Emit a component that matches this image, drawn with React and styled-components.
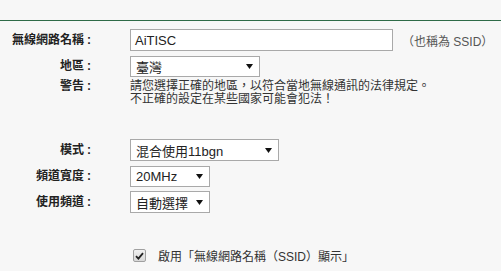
import React from "react";
import styled, { createGlobalStyle } from "styled-components";

const GlobalStyle = createGlobalStyle`
  html, body { margin: 0; padding: 0; }
  body {
    background: #f7f7f7;
    font-family: "Liberation Sans", "Noto Sans CJK TC", sans-serif;
    color: #333;
  }
`;

const Page = styled.div`
  width: 501px;
  height: 271px;
  overflow: hidden;
`;

const TopBar = styled.div`
  height: 20px;
  border-bottom: 1px solid #2e6b48;
`;

const Form = styled.div`
  display: flex;
  flex-direction: column;
  padding-top: 8px;
`;

const Row = styled.div`
  display: grid;
  grid-template-columns: 91px 1fr;
  column-gap: 39px;
  align-items: ${(p) => (p.$top ? "start" : "center")};
  margin-top: ${(p) => p.$mt || 0}px;
`;

const Label = styled.div`
  text-align: right;
  font-size: 12px;
  font-weight: bold;
  color: #222;
  line-height: 13px;
  white-space: nowrap;
`;

const Colon = styled.span`
  margin-left: 3px;
`;

const Field = styled.div`
  display: flex;
  align-items: center;
  gap: 8px;
`;

const TextInput = styled.div`
  box-sizing: border-box;
  width: 263px;
  height: 22px;
  border: 1px solid #a9a9a9;
  background: #fff;
  font-size: 13px;
  color: #222;
  padding-left: 4px;
  display: flex;
  align-items: center;
`;

const Note = styled.span`
  font-size: 12px;
  color: #555;
  margin-left: 1px;
`;

const SelectBox = styled.div`
  box-sizing: border-box;
  width: ${(p) => p.$w}px;
  height: ${(p) => p.$h || 21}px;
  border: 1px solid #a9a9a9;
  background: #fff;
  font-size: 13px;
  color: #222;
  padding: 0 6px 0 5px;
  display: flex;
  align-items: center;
  justify-content: space-between;
`;

const Arrow = () => (
  <svg width="7" height="5" viewBox="0 0 7 5">
    <path d="M0 0 L7 0 L3.5 5 Z" fill="#111" />
  </svg>
);

const Select = ({ w, h, children }) => (
  <SelectBox $w={w} $h={h}>
    <span>{children}</span>
    <Arrow />
  </SelectBox>
);

const Warning = styled.div`
  font-size: 12px;
  line-height: 13px;
  color: #333;
`;

const CheckRow = styled.div`
  display: flex;
  align-items: center;
  margin-top: 34px;
  padding-left: 133px;
  gap: 12px;
  font-size: 12px;
  color: #333;
`;

const CheckBox = styled.span`
  box-sizing: border-box;
  width: 13px;
  height: 13px;
  border: 1px solid #a0a0a0;
  border-radius: 2px;
  background: linear-gradient(#f0f0f0, #d8d8d8);
  display: flex;
  align-items: center;
  justify-content: center;
`;

export default function App() {
  return (
    <Page>
      <GlobalStyle />
      <TopBar />
      <Form>
        <Row>
          <Label>無線網路名稱<Colon>:</Colon></Label>
          <Field>
            <TextInput>AiTISC</TextInput>
            <Note>（也稱為 SSID）</Note>
          </Field>
        </Row>
        <Row $mt={5}>
          <Label>地區<Colon>:</Colon></Label>
          <Field>
            <Select w={130}>臺灣</Select>
          </Field>
        </Row>
        <Row $mt={3} $top>
          <Label>警告<Colon>:</Colon></Label>
          <Warning>
            請您選擇正確的地區，以符合當地無線通訊的法律規定。
            <br />
            不正確的設定在某些國家可能會犯法！
          </Warning>
        </Row>
        <Row $mt={33}>
          <Label>模式<Colon>:</Colon></Label>
          <Field>
            <Select w={149} h={22}>混合使用11bgn</Select>
          </Field>
        </Row>
        <Row $mt={5}>
          <Label>頻道寬度<Colon>:</Colon></Label>
          <Field>
            <Select w={80}>20MHz</Select>
          </Field>
        </Row>
        <Row $mt={4}>
          <Label>使用頻道<Colon>:</Colon></Label>
          <Field>
            <Select w={80} h={22}>自動選擇</Select>
          </Field>
        </Row>
        <CheckRow>
          <CheckBox>
            <svg width="9" height="8" viewBox="0 0 9 8">
              <path d="M1 4.2 L3.4 6.6 L8 1.2" stroke="#222" strokeWidth="1.8" fill="none" />
            </svg>
          </CheckBox>
          <span>啟用「無線網路名稱（SSID）顯示」</span>
        </CheckRow>
      </Form>
    </Page>
  );
}
